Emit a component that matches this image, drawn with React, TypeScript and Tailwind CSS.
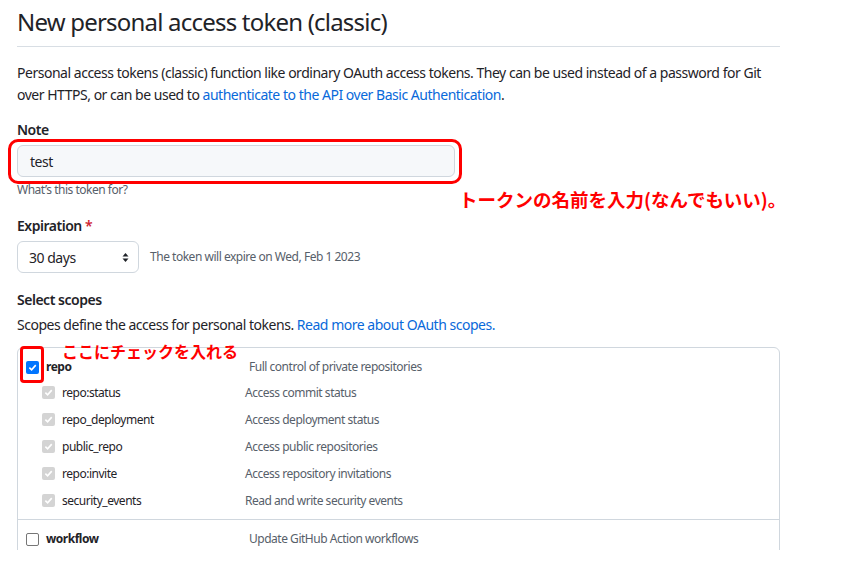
import React from "react";

const font = { fontFamily: '"Noto Sans", "Liberation Sans", sans-serif', letterSpacing: "-0.03em" };
const jp = { fontFamily: '"Noto Sans CJK JP", sans-serif', letterSpacing: "0" };

function SubRow({ label, desc }: { label: string; desc: string }) {
  return (
    <div className="flex h-[27px] items-center pl-[16px]">
      <div className="flex w-[203px] items-center">
        <span className="flex h-[13px] w-[13px] items-center justify-center rounded-[2px] bg-[#d4d4d4]">
          <svg width="9" height="9" viewBox="0 0 10 10">
            <path d="M1.5 5.2 L4 7.6 L8.6 2.4" stroke="#ffffff" strokeWidth="1.8" fill="none" />
          </svg>
        </span>
        <span className="ml-[7px] text-[12px] text-[#1f2328]">{label}</span>
      </div>
      <span className="text-[12px] text-[#57606a]">{desc}</span>
    </div>
  );
}

export default function App() {
  return (
    <div className="h-[550px] w-[853px] overflow-hidden bg-white" style={font}>
      <div className="ml-[17px] w-[763px]">
        <div className="mt-[4px] border-b border-[#d8dee4] pb-[6px]">
          <h1 className="text-[24px] leading-[36px] tracking-[-0.033em] text-[#1f2328]">New personal access token (classic)</h1>
        </div>
        <p className="mt-[15px] text-[14px] leading-[22px] text-[#1f2328]">
          Personal access tokens (classic) function like ordinary OAuth access tokens. They can be used instead of a password for Git over HTTPS, or can be used to{" "}
          <span className="text-[#0969da]">authenticate to the API over Basic Authentication</span>.
        </p>

        <div className="mt-[13px] text-[14px] font-semibold leading-[21px] text-[#1f2328]">Note</div>
        <div className="relative mt-[5px] w-[438px]">
          <div className="flex h-[32px] items-center rounded-md border border-[#d0d7de] bg-[#f6f8fa] pl-[12px] text-[14px] text-[#1f2328]">
            test
          </div>
          <div className="absolute -left-[9px] -top-[6px] -right-[7px] -bottom-[7px] rounded-[10px] border-[3px] border-[#ff0000]" />
        </div>
        <div className="relative">
          <div className="mt-[4px] text-[12px] leading-[18px] text-[#57606a]">What’s this token for?</div>
          <div className="absolute left-[442px] top-[6px] whitespace-nowrap text-[18.5px] font-bold leading-[24px] text-[#ff0000]" style={jp}>
            トークンの名前を入力(なんでもいい)。
          </div>
        </div>

        <div className="mt-[16px] text-[14px] font-semibold leading-[21px] text-[#1f2328]">
          Expiration <span className="text-[#cf222e]">*</span>
        </div>
        <div className="mt-[5px] flex items-center">
          <div className="flex h-[32px] w-[122px] items-center justify-between rounded-md border border-[#d0d7de] bg-white pl-[11px] pr-[9px] text-[14px] text-[#1f2328]">
            <span>30 days</span>
            <svg width="7" height="11" viewBox="0 0 7 11">
              <path d="M3.5 1 L6.5 4.5 L0.5 4.5 Z" fill="#1f2328" />
              <path d="M3.5 10 L6.5 6.5 L0.5 6.5 Z" fill="#1f2328" />
            </svg>
          </div>
          <span className="ml-[11px] text-[12px] text-[#57606a]">The token will expire on Wed, Feb 1 2023</span>
        </div>

        <div className="mt-[16px] text-[14px] font-semibold leading-[21px] text-[#1f2328]">Select scopes</div>
        <p className="mt-[4px] text-[14px] leading-[22px] text-[#1f2328]">
          Scopes define the access for personal tokens. <span className="text-[#0969da]">Read more about OAuth scopes.</span>
        </p>

        <div className="mt-[11px] rounded-md border border-[#d0d7de]">
          <div className="relative border-b border-[#d0d7de] pb-[5px] pl-[8px] pt-[9px]">
            <div className="absolute left-[44px] top-[-8px] whitespace-nowrap text-[16px] font-bold leading-[22px] text-[#ff0000]" style={jp}>
              ここにチェックを入れる
            </div>
            <div className="flex h-[20px] items-center">
              <div className="relative flex w-[223px] items-center">
                <span className="flex h-[13px] w-[13px] items-center justify-center rounded-[2px] bg-[#0075ff]">
                  <svg width="9" height="9" viewBox="0 0 10 10">
                    <path d="M1.5 5.2 L4 7.6 L8.6 2.4" stroke="#ffffff" strokeWidth="1.8" fill="none" />
                  </svg>
                </span>
                <div className="absolute -left-[6px] -top-[12px] h-[37px] w-[24px] rounded-[4px] border-[3px] border-[#ff0000]" />
                <span className="ml-[7px] text-[12px] font-bold text-[#1f2328]">repo</span>
              </div>
              <span className="text-[12px] text-[#57606a]">Full control of private repositories</span>
            </div>
            <div className="mt-[2px]">
              <SubRow label="repo:status" desc="Access commit status" />
              <SubRow label="repo_deployment" desc="Access deployment status" />
              <SubRow label="public_repo" desc="Access public repositories" />
              <SubRow label="repo:invite" desc="Access repository invitations" />
              <SubRow label="security_events" desc="Read and write security events" />
            </div>
          </div>
          <div className="pb-[20px] pl-[8px] pt-[9px]">
            <div className="flex h-[20px] items-center">
              <div className="flex w-[223px] items-center">
                <span className="h-[13px] w-[13px] rounded-[2px] border border-[#767676] bg-white" />
                <span className="ml-[7px] text-[12px] font-bold text-[#1f2328]">workflow</span>
              </div>
              <span className="text-[12px] text-[#57606a]">Update GitHub Action workflows</span>
            </div>
          </div>
        </div>
      </div>
    </div>
  );
}
